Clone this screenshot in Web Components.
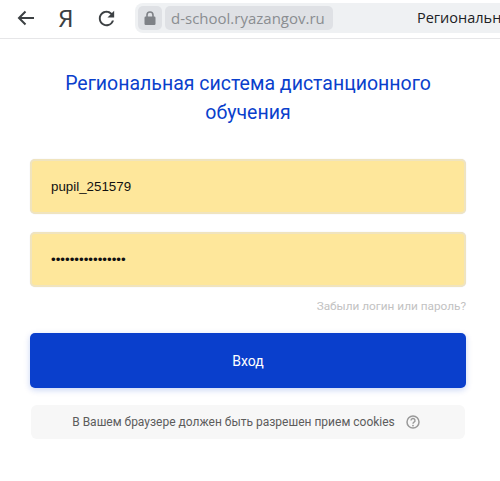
<!DOCTYPE html>
<html><head><meta charset="utf-8"><style>
html,body{margin:0;padding:0;background:#fff;overflow:hidden}
body{width:500px;height:481px;font-family:Roboto,sans-serif}
</style></head><body>
<browser-bar></browser-bar>
<login-card>
<field-box>pupil_251579</field-box>
<field-box>••••••••••••••••</field-box>
</login-card>
<script>
function def(name,html){customElements.define(name,class extends HTMLElement{constructor(){super();this.attachShadow({mode:'open'}).innerHTML=html}})}
def('browser-bar',`<style>
:host{display:flex;align-items:flex-start;height:38px;border-bottom:1px solid #e6e6e8;background:#fff;overflow:hidden}
.ic{flex:none;display:flex;align-items:center;justify-content:center;height:36px}
.ic svg{flex:none}
.back{width:18px;margin-left:17px}
.ya{width:14px;margin-left:24px;font:400 24px/36px "Noto Sans",sans-serif;color:#3c4043}
.re{width:18px;margin-left:24px}
.addr{flex:1;margin:3px 0 0 20px;height:30px;background:#eff1f3;border-radius:8px 0 0 8px;display:flex;align-items:center;padding-left:3px;min-width:0}
.lock{width:24px;height:24px;border-radius:5px;background:#dfe1e5;display:flex;align-items:center;justify-content:center;flex:none}
.host{margin-left:3px;height:24px;padding:0 6px;border-radius:5px;background:#dfe1e5;font:15px/24px "Open Sans",sans-serif;color:#8a8d91;flex:none;width:168px;box-sizing:border-box;white-space:nowrap}
.ttl{margin-left:84px;font:14.5px/30px "Open Sans","Noto Sans",sans-serif;color:#202124;white-space:nowrap}
</style>
<div class="ic back"><svg width="18" height="16" viewBox="0 0 18 16"><path d="M17 8H2M8.500 1.500 2 8l6.500 6.500" fill="none" stroke="#3c4043" stroke-width="2"/></svg></div>
<div class="ic ya">Я</div>
<div class="ic re"><svg width="23" height="23" viewBox="0 0 24 24"><path fill="#3c4043" d="M17.650 6.350A7.958 7.958 0 0 0 12 4c-4.420 0-7.990 3.580-7.990 8s3.570 8 7.990 8c3.730 0 6.840-2.550 7.730-6h-2.080A5.990 5.990 0 0 1 12 18c-3.310 0-6-2.690-6-6s2.690-6 6-6c1.660 0 3.140.69 4.220 1.780L13 11h7V4l-2.350 2.350z"/></svg></div>
<div class="addr"><div class="lock"><svg width="12" height="14" viewBox="0 0 12 14"><path d="M3 6V4a3 3 0 0 1 6 0v2" fill="none" stroke="#7f8287" stroke-width="1.600"/><rect x=".5" y="5.500" width="11" height="8.500" rx="1.200" fill="#7f8287"/></svg></div><div class="host">d-school.ryazangov.ru</div><div class="ttl">Региональн</div></div>`);
def('field-box',`<style>
:host{display:flex;align-items:center;height:55px;box-sizing:border-box;padding:0 19px;background:#fee79b;border:2px solid #f0e4be;border-radius:5px;font:13.333px "Liberation Sans",sans-serif;color:#111;box-shadow:0 0 1px #d8d8e0}
</style><slot></slot>`);
def('login-card',`<style>
:host{display:block;padding:31px 34px 0 30px}
h1{margin:0 0 32px;font:400 19.500px/28.500px Roboto,sans-serif;color:#0a3fcc;text-align:center;padding:0 20px}
.f{display:flex;flex-direction:column;gap:18px}
.forgot{margin-top:11px;text-align:right;font:11.800px/16px Roboto,sans-serif;color:#c2c2c2}
.btn{margin-top:19px;height:55px;background:#0a3fcc;color:#fff;border-radius:5px;display:flex;align-items:center;justify-content:center;font:14px Roboto,sans-serif;box-shadow:0 2px 6px rgba(10,63,204,.22)}
.note{margin:17px 1px 0;height:34px;box-sizing:border-box;padding-right:4px;background:#f7f7f7;border-radius:6px;display:flex;align-items:center;justify-content:center;gap:11px;font:12px Roboto,sans-serif;color:#5c5c5c}
.note svg{flex:none}
</style>
<h1>Региональная система дистанционного обучения</h1>
<div class="f"><slot></slot></div>
<div class="forgot">Забыли логин или пароль?</div>
<div class="btn">Вход</div>
<div class="note"><span>В Вашем браузере должен быть разрешен прием cookies</span><svg width="14" height="14" viewBox="0 0 14 14"><circle cx="7" cy="7" r="6" fill="none" stroke="#999" stroke-width="1.500"/><path d="M5 5.500a2 2 0 1 1 3 1.700c-.7.4-1 .8-1 1.600" fill="none" stroke="#999" stroke-width="1.400"/><circle cx="7" cy="10.600" r=".9" fill="#999"/></svg></div>`);
</script>
</body></html>
